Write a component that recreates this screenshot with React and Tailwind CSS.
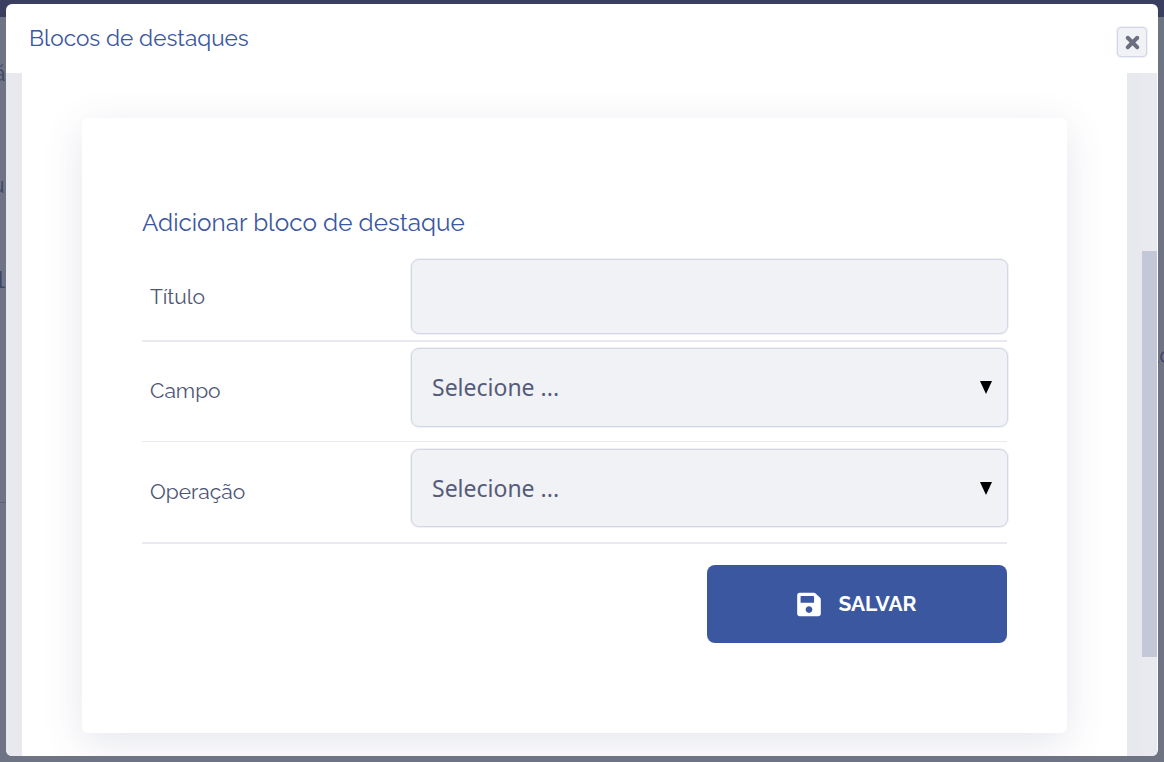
import React from 'react';
import { X } from 'lucide-react';

const headingFont = "font-['Raleway','Lato','Open_Sans',sans-serif]";

function SaveIcon() {
  return (
    <svg viewBox="0 0 448 512" className="w-[24px] h-[27px]" fill="#fff">
      <path d="M433.9 129.9l-83.9-83.9A48 48 0 0 0 316.1 32H48C21.5 32 0 53.5 0 80v352c0 26.5 21.5 48 48 48h352c26.5 0 48-21.5 48-48V163.9a48 48 0 0 0-14.1-34zM224 416c-35.3 0-64-28.7-64-64 0-35.3 28.7-64 64-64s64 28.7 64 64c0 35.3-28.7 64-64 64zm96-304.5V212c0 6.6-5.4 12-12 12H76c-6.6 0-12-5.4-12-12V108c0-6.6 5.4-12 12-12h228.5c3.2 0 6.2 1.3 8.5 3.5l3.5 3.5c2.3 2.3 3.5 5.3 3.5 8.5z" />
    </svg>
  );
}

function Row({ label, labelClass, height, rowClass, children }) {
  return (
    <div className={`flex items-center border-[#e9eaf0] ${rowClass}`}>
      <label className={`w-[269px] pl-2 text-[21px] text-[#4d5575] ${headingFont} ${labelClass}`}>{label}</label>
      <div className={`w-[597px] -mr-px ${height} bg-[#f1f2f6] border border-[#d3d6e4] rounded-lg shadow-[0_0_0_1px_rgba(211,214,228,0.35)] relative flex items-center pl-5`}>
        {children}
      </div>
    </div>
  );
}

function Select() {
  return (
    <>
      <span className="text-[23px] text-[#555c7a] font-['Noto_Sans',sans-serif]">Selecione ...</span>
      <span className="absolute right-[15px] top-[32px] w-0 h-0 border-x-[6px] border-x-transparent border-t-[13px] border-t-black" />
    </>
  );
}

export default function App() {
  return (
    <div className="relative w-full h-[762px] overflow-hidden bg-[#6f7485]">
      {/* page behind the modal */}
      <div className="h-[17px] bg-[#3a3f60]" />
      <div className="absolute left-[-7px] top-[56px] text-[23px] text-[#3f4663] font-['Raleway',sans-serif]">ã</div>
      <div className="absolute left-[-9px] top-[168px] text-[23px] text-[#3f4663] font-['Raleway',sans-serif]">u</div>
      <div className="absolute left-[-7px] top-[262px] text-[23px] text-[#3f4663] font-['Lato',sans-serif]">1</div>
      <div className="absolute right-[-8px] top-[338px] text-[23px] text-[#3f4663] font-['Raleway',sans-serif]">.c</div>
      <div className="absolute left-0 top-[502px] w-[6px] h-px bg-[#5d6275]" />

      {/* modal */}
      <div className="absolute left-[6px] top-[4px] w-[1152px] h-[752px] bg-white rounded-[6px] flex flex-col overflow-hidden">
        <div className="h-[69px] shrink-0 flex items-start justify-between pl-[23px] pr-[11px]">
          <h1 className={`mt-[20px] text-[22.6px] leading-[28px] text-[#3b57a0] ${headingFont}`}>Blocos de destaques</h1>
          <button className="mt-[23px] w-[30px] h-[30px] flex items-center justify-center bg-[#f1f2f6] border border-[#d3d6e4] rounded-[4px] shadow-[0_0_0_1px_rgba(211,214,228,0.35)]">
            <X size={19} strokeWidth={5} color="#6b6f80" />
          </button>
        </div>

        <div className="flex-1 flex min-h-0">
          <div className="w-[16px] shrink-0 bg-[#e8e9ef]" />
          <div className="flex-1 pl-[60px] pt-[45px]">
            <div className="w-[985px] h-[615px] bg-white rounded-[6px] shadow-[0_10px_40px_rgba(70,80,130,0.14)] px-[60px] pt-[88px]">
              <h2 className={`text-[24.3px] leading-[34px] text-[#3b57a0] ${headingFont}`}>Adicionar bloco de destaque</h2>
              <Row label="Título" labelClass="" height="h-[75px]" rowClass="mt-[19px] pb-[6px] border-b-2" />
              <Row label="Campo" labelClass="mt-[7px]" height="h-[79px]" rowClass="mt-[6px] pb-[14px] border-b">
                <Select />
              </Row>
              <Row label="Operação" labelClass="mt-[7px]" height="h-[78px]" rowClass="mt-[7px] pb-[15px] border-b-2">
                <Select />
              </Row>
              <div className="flex justify-end mt-[21px]">
                <button className={`w-[300px] h-[78px] bg-[#3b57a0] rounded-lg flex items-center justify-center gap-[17px] text-white text-[21px] font-bold ${headingFont}`}>
                  <SaveIcon />
                  SALVAR
                </button>
              </div>
            </div>
          </div>
          <div className="w-[15px] shrink-0 bg-[#e8e9ef]" />
          <div className="w-[15px] shrink-0 bg-[#e9eaf0] pt-[178px] mr-px">
            <div className="h-[406px] bg-[#c3c8d8]" />
          </div>
        </div>
      </div>
    </div>
  );
}
